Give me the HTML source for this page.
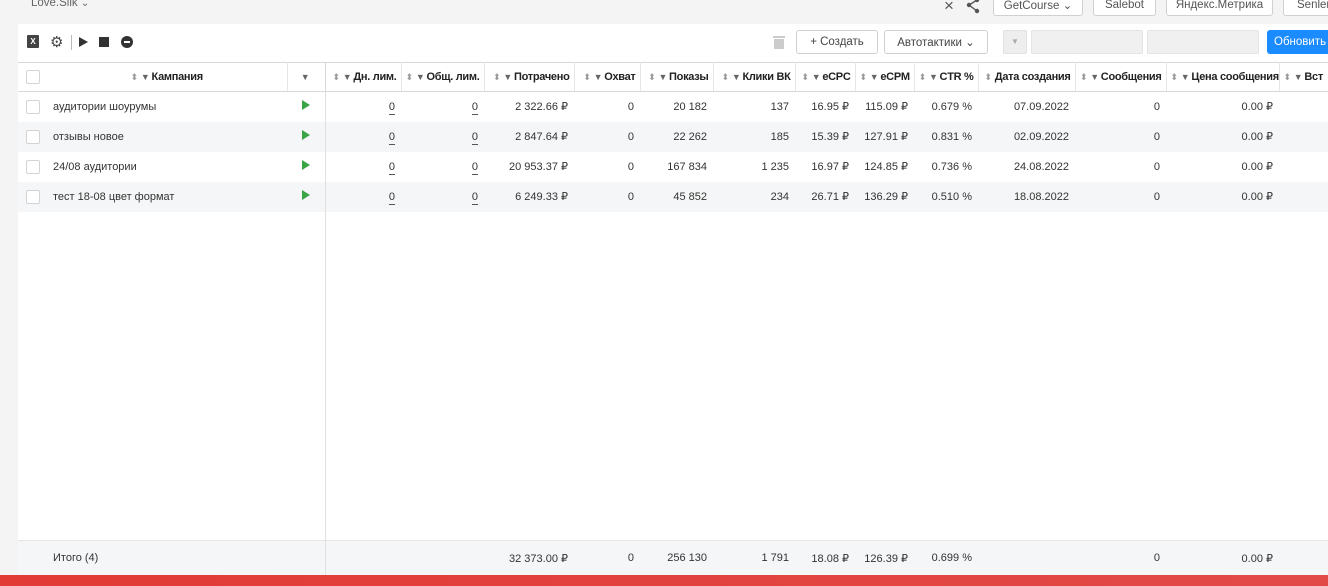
<!DOCTYPE html>
<html><head><meta charset="utf-8"><style>
*{box-sizing:border-box;margin:0;padding:0}
body{width:1328px;height:586px;background:#f4f4f4;font-family:"Liberation Sans",sans-serif;font-size:11px;color:#333;position:relative;overflow:hidden}
.top{position:absolute;top:0;left:0;width:1328px;height:24px}
.btn{position:absolute;border:1px solid #d0d0d0;border-radius:3px;background:#fff;color:#555;font-size:11.5px;display:flex;align-items:center;justify-content:center}
.panel{position:absolute;left:18px;top:24px;width:1310px;height:551px;background:#fff}
table{position:absolute;left:18px;top:62px;border-collapse:collapse;table-layout:fixed;width:1321px}
td,th{height:30px;white-space:nowrap;overflow:hidden;padding:0 6px;text-align:right;font-weight:normal}
th{height:29px;border-right:1px solid #e6e6e6;border-bottom:1px solid #d8d8d8;border-top:1px solid #d8d8d8;color:#222;font-weight:bold;font-size:11px;padding:0 4px;letter-spacing:-0.3px}
tr.g td{background:#f5f6f7}
.s{color:#999;font-size:9px;margin-right:3px;font-weight:normal}
.f{color:#666;font-size:9px;margin-right:2px}
.cb{display:inline-block;width:14px;height:14px;border:1px solid #d4d4d4;border-radius:2px;background:#fff;vertical-align:middle}
.pl{display:inline-block;width:0;height:0;border-left:8px solid #3aa447;border-top:5px solid transparent;border-bottom:5px solid transparent}
u{text-decoration:none;border-bottom:1px solid #555;padding-bottom:1px}
.red{position:absolute;left:0;top:575px;width:1328px;height:11px;background:linear-gradient(90deg,#e23a35,#e24a48)}
</style></head><body>
<div class="top">
<div style="position:absolute;left:31px;top:-3px;color:#666;font-size:11.5px">Love.Silk <span style="font-size:10px">&#8964;</span></div>
<div style="position:absolute;left:944px;top:-4px;font-size:17px;color:#555">×</div>
<svg style="position:absolute;left:965px;top:-2px" width="16" height="16" viewBox="0 0 16 16"><circle cx="12" cy="2" r="2.2" fill="#555"/><circle cx="4" cy="7" r="2.2" fill="#555"/><circle cx="12" cy="13" r="2.2" fill="#555"/><path d="M12 2L4 7L12 13" stroke="#555" stroke-width="1.4" fill="none"/></svg>
<div class="btn" style="left:993px;top:-6px;width:90px;height:22px">GetCourse &#8964;</div>
<div class="btn" style="left:1093px;top:-6px;width:63px;height:22px">Salebot</div>
<div class="btn" style="left:1166px;top:-6px;width:107px;height:22px">Яндекс.Метрика</div>
<div class="btn" style="left:1283px;top:-6px;width:60px;height:22px;justify-content:flex-start;padding-left:13px">Senler</div>
</div>
<div class="panel"></div>
<div style="position:absolute;left:27px;top:35px;width:12px;height:13px;background:#444;border-radius:1px;color:#fff;font-size:8px;line-height:13px;text-align:center;font-weight:bold">X</div>
<div style="position:absolute;left:50px;top:33px;font-size:15px;color:#444">&#9881;</div>
<div style="position:absolute;left:71px;top:35px;width:1px;height:15px;background:#bbb"></div>
<div style="position:absolute;left:79px;top:37px;border-left:9px solid #333;border-top:5px solid transparent;border-bottom:5px solid transparent"></div>
<div style="position:absolute;left:99px;top:37px;width:10px;height:10px;background:#333"></div>
<div style="position:absolute;left:121px;top:36px;width:12px;height:12px;border-radius:50%;background:#333"><div style="position:absolute;left:3px;top:5px;width:6px;height:2px;background:#fff"></div></div>
<svg style="position:absolute;left:773px;top:35px" width="12" height="14"><rect x="0" y="1" width="12" height="2" fill="#ccc"/><rect x="1" y="4" width="10" height="10" fill="#ccc"/></svg>
<div class="btn" style="left:796px;top:30px;width:82px;height:24px;color:#444">+ Создать</div>
<div class="btn" style="left:884px;top:30px;width:104px;height:24px;color:#444">Автотактики &#8964;</div>
<div style="position:absolute;left:1003px;top:30px;width:24px;height:24px;background:#eee;border:1px solid #e2e2e2;border-radius:2px;color:#aaa;font-size:8px;text-align:center;line-height:22px">▼</div>
<div style="position:absolute;left:1031px;top:30px;width:112px;height:24px;background:#f0f0f0;border:1px solid #e4e4e4;border-radius:2px"></div>
<div style="position:absolute;left:1147px;top:30px;width:112px;height:24px;background:#f0f0f0;border:1px solid #e4e4e4;border-radius:2px"></div>
<div style="position:absolute;left:1267px;top:30px;width:64px;height:24px;background:#1a8cff;border-radius:3px;color:#fff;font-size:11.5px;line-height:24px;padding-left:7px">Обновить</div>
<table>
<colgroup><col style="width:29px"><col style="width:240px"><col style="width:38px"><col style="width:76px"><col style="width:83px"><col style="width:90px"><col style="width:66px"><col style="width:73px"><col style="width:82px"><col style="width:60px"><col style="width:59px"><col style="width:64px"><col style="width:97px"><col style="width:91px"><col style="width:113px"><col style="width:60px"></colgroup>
<tr><th style="text-align:left;padding-left:8px;border-right:none"><span class="cb"></span></th><th style="text-align:center"><span class="s">⬍</span><span class="f">▼</span>Кампания</th><th style="text-align:center;border-right:1px solid #d8d8d8"><span class="f">▼</span></th>
<th><span class="s">⬍</span><span class="f">▼</span>Дн. лим.</th><th><span class="s">⬍</span><span class="f">▼</span>Общ. лим.</th><th><span class="s">⬍</span><span class="f">▼</span>Потрачено</th><th><span class="s">⬍</span><span class="f">▼</span>Охват</th><th><span class="s">⬍</span><span class="f">▼</span>Показы</th><th><span class="s">⬍</span><span class="f">▼</span>Клики ВК</th><th><span class="s">⬍</span><span class="f">▼</span>eCPC</th><th><span class="s">⬍</span><span class="f">▼</span>eCPM</th><th><span class="s">⬍</span><span class="f">▼</span>CTR %</th><th><span class="s">⬍</span>Дата создания</th><th><span class="s">⬍</span><span class="f">▼</span>Сообщения</th><th><span class="s">⬍</span><span class="f">▼</span>Цена сообщения</th><th style="text-align:left"><span class="s">⬍</span><span class="f">▼</span>Вст</th></tr>
<tr><td style="text-align:left;padding-left:8px"><span class="cb"></span></td><td style="text-align:left">аудитории шоурумы</td><td style="text-align:center;border-right:1px solid #e0e0e0"><span class="pl"></span></td><td><u>0</u></td><td><u>0</u></td><td>2 322.66 ₽</td><td>0</td><td>20 182</td><td>137</td><td>16.95 ₽</td><td>115.09 ₽</td><td>0.679 %</td><td>07.09.2022</td><td>0</td><td>0.00 ₽</td><td></td></tr>
<tr class="g"><td style="text-align:left;padding-left:8px"><span class="cb"></span></td><td style="text-align:left">отзывы новое</td><td style="text-align:center;border-right:1px solid #e0e0e0"><span class="pl"></span></td><td><u>0</u></td><td><u>0</u></td><td>2 847.64 ₽</td><td>0</td><td>22 262</td><td>185</td><td>15.39 ₽</td><td>127.91 ₽</td><td>0.831 %</td><td>02.09.2022</td><td>0</td><td>0.00 ₽</td><td></td></tr>
<tr><td style="text-align:left;padding-left:8px"><span class="cb"></span></td><td style="text-align:left">24/08 аудитории</td><td style="text-align:center;border-right:1px solid #e0e0e0"><span class="pl"></span></td><td><u>0</u></td><td><u>0</u></td><td>20 953.37 ₽</td><td>0</td><td>167 834</td><td>1 235</td><td>16.97 ₽</td><td>124.85 ₽</td><td>0.736 %</td><td>24.08.2022</td><td>0</td><td>0.00 ₽</td><td></td></tr>
<tr class="g"><td style="text-align:left;padding-left:8px"><span class="cb"></span></td><td style="text-align:left">тест 18-08 цвет формат</td><td style="text-align:center;border-right:1px solid #e0e0e0"><span class="pl"></span></td><td><u>0</u></td><td><u>0</u></td><td>6 249.33 ₽</td><td>0</td><td>45 852</td><td>234</td><td>26.71 ₽</td><td>136.29 ₽</td><td>0.510 %</td><td>18.08.2022</td><td>0</td><td>0.00 ₽</td><td></td></tr>
<tr><td colspan="2" style="height:329px"></td><td style="border-right:1px solid #e0e0e0"></td><td colspan="13"></td></tr>
<tr class="g"><td style="height:35px;border-top:1px solid #e6e6e6"></td><td style="text-align:left;border-top:1px solid #e6e6e6">Итого (4)</td><td style="border-right:1px solid #e0e0e0;border-top:1px solid #e6e6e6"></td><td style="border-top:1px solid #e6e6e6"></td><td style="border-top:1px solid #e6e6e6"></td><td style="border-top:1px solid #e6e6e6">32 373.00 ₽</td><td style="border-top:1px solid #e6e6e6">0</td><td style="border-top:1px solid #e6e6e6">256 130</td><td style="border-top:1px solid #e6e6e6">1 791</td><td style="border-top:1px solid #e6e6e6">18.08 ₽</td><td style="border-top:1px solid #e6e6e6">126.39 ₽</td><td style="border-top:1px solid #e6e6e6">0.699 %</td><td style="border-top:1px solid #e6e6e6"></td><td style="border-top:1px solid #e6e6e6">0</td><td style="border-top:1px solid #e6e6e6">0.00 ₽</td><td style="border-top:1px solid #e6e6e6"></td></tr>
</table>
<div class="red"></div>
</body></html>
